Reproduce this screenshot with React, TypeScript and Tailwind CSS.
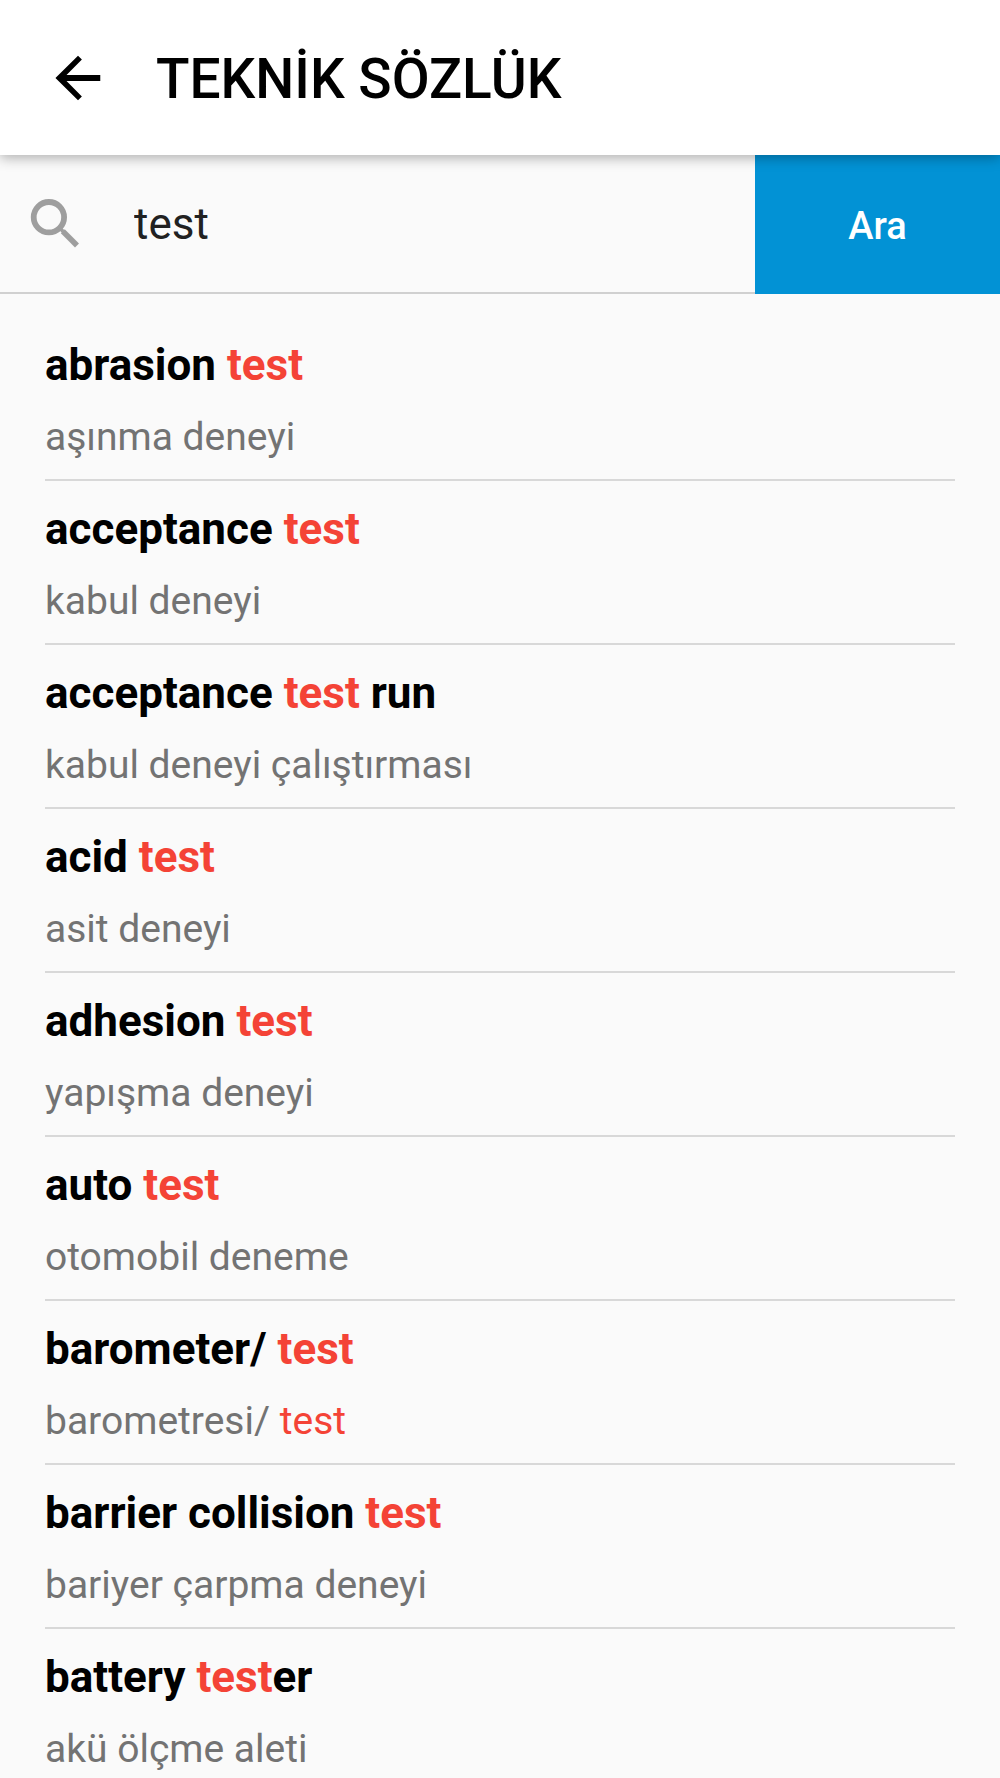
import React, { useState } from 'react'

interface Entry {
  term: string
  meaning: string
}

const entries: Entry[] = [
  { term: 'abrasion test', meaning: 'aşınma deneyi' },
  { term: 'acceptance test', meaning: 'kabul deneyi' },
  { term: 'acceptance test run', meaning: 'kabul deneyi çalıştırması' },
  { term: 'acid test', meaning: 'asit deneyi' },
  { term: 'adhesion test', meaning: 'yapışma deneyi' },
  { term: 'auto test', meaning: 'otomobil deneme' },
  { term: 'barometer/ test', meaning: 'barometresi/ test' },
  { term: 'barrier collision test', meaning: 'bariyer çarpma deneyi' },
  { term: 'battery tester', meaning: 'akü ölçme aleti' },
]

// Splits the text around the searched word and colours each match
function Highlight({ text, query }: { text: string; query: string }) {
  if (!query) return <>{text}</>

  return (
    <>
      {text.split(query).map((part, i) => (
        <React.Fragment key={i}>
          {i > 0 && <span className="text-[#f44336]">{query}</span>}
          {part}
        </React.Fragment>
      ))}
    </>
  )
}

export default function App() {
  const [value, setValue] = useState('test')
  const [query, setQuery] = useState('test')

  const handleSubmit = (e: React.FormEvent) => {
    e.preventDefault()
    setQuery(value.trim())
  }

  return (
    <div className="h-screen overflow-hidden flex flex-col bg-[#fafafa] font-['Roboto',sans-serif]">
      <header className="relative z-10 flex items-center shrink-0 h-[155px] px-[45px] bg-white shadow-[0_3px_12px_rgba(0,0,0,0.3)]">
        <button type="button" aria-label="Geri" className="shrink-0">
          <svg viewBox="0 0 24 24" className="size-[66px] fill-black">
            <path d="M20.1 10.9H7.83l5.59-5.59L12 3.9l-8.2 8.1 8.2 8.1 1.41-1.41L7.83 13.1H20.1v-2.2z" />
          </svg>
        </button>
        <h1 className="ml-[45px] pt-[3px] text-[55px] leading-[64px] font-medium text-black">TEKNİK SÖZLÜK</h1>
      </header>

      <form onSubmit={handleSubmit} className="flex shrink-0 h-[139px]">
        <div className="flex items-center flex-1 min-w-0 pl-[23px] border-b-2 border-[#d0d0d0]">
          <label htmlFor="search" aria-label="Ara" className="shrink-0">
            <svg viewBox="0 0 66 66" fill="none" className="size-[66px] stroke-[#9e9e9e]">
              <circle cx="25.9" cy="26.2" r="15.2" strokeWidth="5.8" />
              <path d="M39.8 40.2L54 54.4" strokeWidth="5.6" />
              <path d="M36.6 36.9l3.6 3.6" strokeWidth="3.6" />
            </svg>
          </label>
          <input
            id="search"
            type="text"
            value={value}
            onChange={(e) => setValue(e.target.value)}
            className="flex-1 min-w-0 ml-[45px] text-[44px] leading-[52px] text-[#212121] bg-transparent outline-none"
          />
        </div>
        <button type="submit" className="w-[245px] shrink-0 pt-[2px] bg-[#0292d5] text-[38px] leading-[44px] font-medium text-white">
          Ara
        </button>
      </form>

      <ul className="px-[45px] pt-[23px]">
        {entries.map((entry) => (
          <li key={entry.term} className="pt-[22px] pb-[19px] border-b-2 border-[#d8d8d8]">
            <p className="text-[44px] leading-[52px] font-bold text-black">
              <Highlight text={entry.term} query={query} />
            </p>
            <p className="mt-[23px] text-[39px] leading-[46px] text-[#737373]">
              <Highlight text={entry.meaning} query={query} />
            </p>
          </li>
        ))}
      </ul>
    </div>
  )
}
